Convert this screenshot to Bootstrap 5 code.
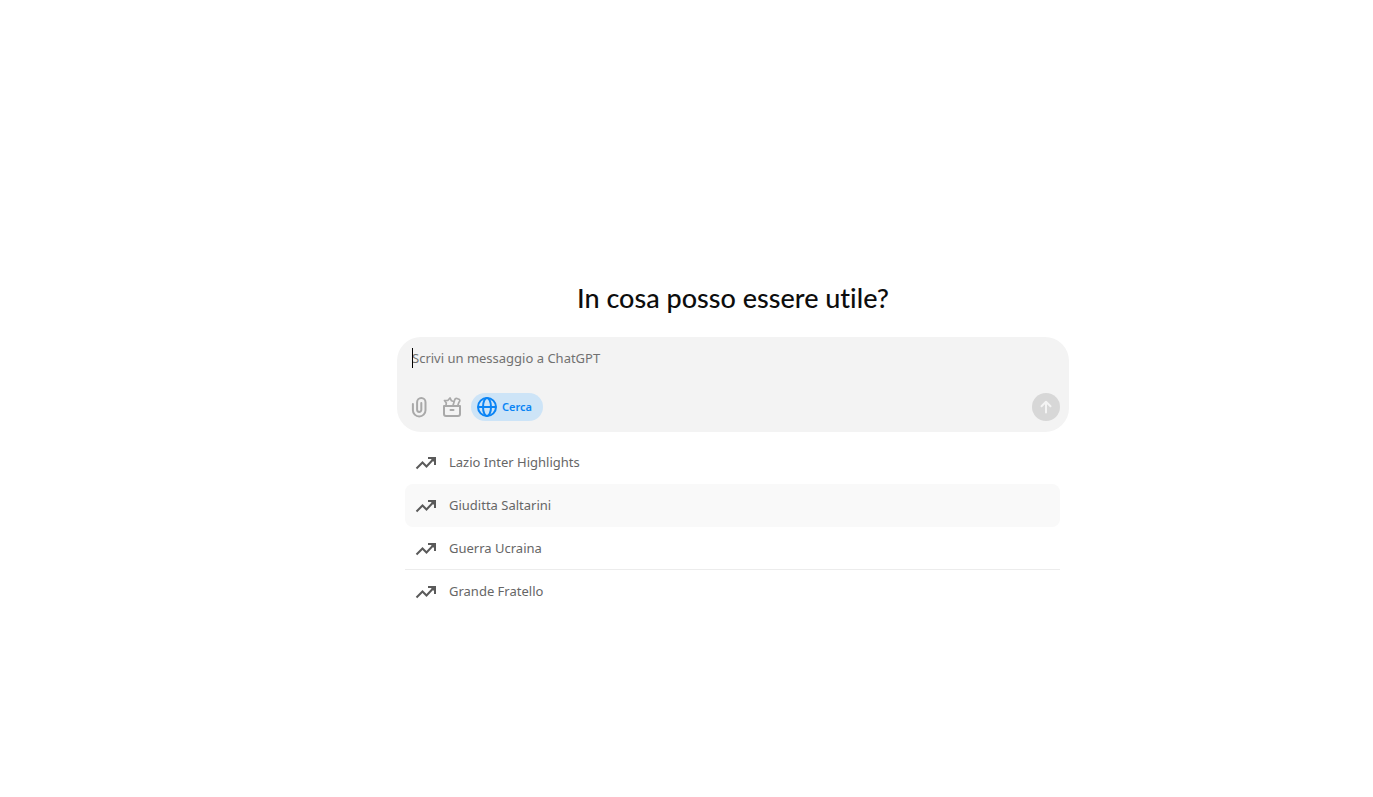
<!DOCTYPE html>
<html lang="it">
<head>
<meta charset="utf-8">
<meta name="viewport" content="width=device-width, initial-scale=1">
<title>ChatGPT</title>
<link href="https://cdn.jsdelivr.net/npm/bootstrap@5.3.0/dist/css/bootstrap.min.css" rel="stylesheet">
<style>
  body { font-family: "Segoe UI", "Noto Sans", sans-serif; font-size: 13px; line-height: 20px; }
  .start-page { padding: 280px 0 24px 93px; }
  .chat-column { max-width: 672px; }
  .greeting { font-family: Lato, sans-serif; font-size: 27px; line-height: 36px; font-weight: 500; font-variant-ligatures: none; color: #0d0d0d; margin-bottom: 21px; }
  .composer { background: #f3f3f3; border-radius: 24px; padding: 11px 9px 11px 15px; }
  .composer input { font-size: 13px; line-height: 20px; color: #0d0d0d; outline: 0; }
  .composer input::placeholder { color: #717171; opacity: 1; }
  .caret { left: 0; top: 0; width: 1px; height: 20px; background: #000; }
  .tools { margin-top: 25px; }
  .tool-btn { color: #a9a9a9; line-height: 0; }
  .tool-attach { margin-left: -4px; margin-right: 10px; }
  .tool-box { margin-right: 7px; }
  .search-btn { height: 28px; padding: 0 11px 0 5px; gap: 4px; background: #cde4f7; color: #0a84f5; font-size: 11px; font-weight: 600; line-height: 28px; }
  .send-btn { width: 28px; height: 28px; background: #d7d7d7; color: #f4f4f4; }
  .trends { padding: 9px 9px 0 8px; }
  .trend { display: flex; align-items: center; height: 43px; gap: 12px; padding: 0 10px; color: #666; text-decoration: none; border-bottom: 1px solid transparent; }
  .trend svg { color: #5a5a5a; margin-top: 1px; }
  .trend:hover, .trend.current { background: #f9f9f9; border-radius: 8px; }
  .trend.ruled { border-bottom-color: #ececec; }
</style>
</head>
<body class="bg-white">
<svg class="d-none" aria-hidden="true">
  <symbol id="trend-icon" viewBox="0 0 22 22"><path d="M1.500 16.500 7.500 10.500l4 4L19 6.500M13 6h7v7" fill="none" stroke="currentColor" stroke-width="2"/><path d="M15 6h5v5z" fill="currentColor"/></symbol>
</svg>
<main class="start-page">
  <div class="chat-column mx-auto">
    <h1 class="greeting text-center">In cosa posso essere utile?</h1>
    <form class="composer">
      <div class="position-relative">
        <input type="text" class="d-block w-100 border-0 bg-transparent p-0" aria-label="Messaggio" placeholder="Scrivi un messaggio a ChatGPT">
        <span class="caret position-absolute"></span>
      </div>
      <div class="tools d-flex align-items-center">
        <button type="button" class="tool-btn tool-attach btn p-0 border-0" aria-label="Allega file">
          <svg width="22" height="24" viewBox="0 0 22 24" fill="none" stroke="currentColor" stroke-width="2" stroke-linecap="round"><path d="M4.900 9v6.200a6.300 6.300 0 0 0 12.600 0V7.200a4.200 4.200 0 0 0-8.400 0v7.600a2.100 2.100 0 0 0 4.200 0V8"/></svg>
        </button>
        <button type="button" class="tool-btn tool-box btn p-0 border-0" aria-label="Strumenti">
          <svg width="24" height="24" viewBox="0 0 24 24" fill="none" stroke="currentColor" stroke-width="2" stroke-linejoin="round" stroke-linecap="round"><path d="M4 11h16v8a2 2 0 0 1-2 2H6a2 2 0 0 1-2-2zM10.500 15h3"/><path d="M6 10.500 6.300 8 4.500 5.500 8 5.300 10 3 11.500 5.800 13.800 6.500" stroke-width="1.700"/><path d="M13 10.500 14.500 5.500Q15 3 17 3.500L19.500 4.500Q20.500 6 18.800 7.500L17.800 10.500" stroke-width="1.700"/></svg>
        </button>
        <button type="button" class="search-btn btn rounded-pill border-0 d-flex align-items-center" aria-pressed="true">
          <svg width="22" height="22" viewBox="0 0 22 22" fill="none" stroke="currentColor" stroke-width="2"><circle cx="11" cy="11" r="9"/><ellipse cx="11" cy="11" rx="4" ry="9"/><path d="M2 11h18"/></svg>
          <span>Cerca</span>
        </button>
        <button type="submit" class="send-btn btn rounded-circle border-0 p-0 ms-auto d-flex align-items-center justify-content-center" aria-label="Invia">
          <svg width="16" height="16" viewBox="0 0 16 16" fill="none" stroke="currentColor" stroke-width="2" stroke-linecap="round" stroke-linejoin="round"><path d="M8 13.500V3M3.500 7.200 8 2.700l4.500 4.500"/></svg>
        </button>
      </div>
    </form>
    <nav class="trends" aria-label="Tendenze">
      <a class="trend" href="#"><svg width="22" height="22"><use href="#trend-icon"/></svg>Lazio Inter Highlights</a>
      <a class="trend current" href="#"><svg width="22" height="22"><use href="#trend-icon"/></svg>Giuditta Saltarini</a>
      <a class="trend ruled" href="#"><svg width="22" height="22"><use href="#trend-icon"/></svg>Guerra Ucraina</a>
      <a class="trend" href="#"><svg width="22" height="22"><use href="#trend-icon"/></svg>Grande Fratello</a>
    </nav>
  </div>
</main>
<script src="https://cdn.jsdelivr.net/npm/bootstrap@5.3.0/dist/js/bootstrap.bundle.min.js"></script>
</body>
</html>
